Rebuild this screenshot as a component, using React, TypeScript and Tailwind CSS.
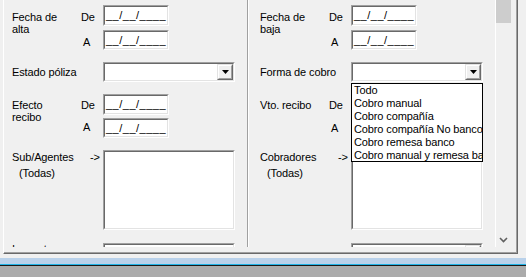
import React from "react";

const Sunken = ({ className, children }: { className: string; children?: React.ReactNode }) => (
  <div className={`border border-t-[#a0a0a0] border-l-[#a0a0a0] border-b-white border-r-white ${className}`}>
    <div className="h-full border border-t-[#696969] border-l-[#696969] border-b-[#e3e3e3] border-r-[#e3e3e3] bg-white">
      {children}
    </div>
  </div>
);

// hidden = box sits under the open dropdown list, so its mask text is not drawn
const DateBox = ({ h, hidden = false }: { h: string; hidden?: boolean }) => (
  <Sunken className={`w-[66px] ${h}`}>
    {!hidden && <div className="pl-[1px] pt-[2px] tracking-[0.5px] whitespace-nowrap">__/__/____</div>}
  </Sunken>
);

const DateLine = ({ label, lc, h, hidden }: { label: string; lc: string; h: string; hidden?: boolean }) => (
  <div className="flex items-start">
    <div className={`w-[22px] ${lc}`}>{label}</div>
    <DateBox h={h} hidden={hidden} />
  </div>
);

const Combo = ({ button = true }: { button?: boolean }) => (
  <Sunken className="w-[132px] h-[20px]">
    <div className="h-full flex justify-end">
      {button && (
        <div className="w-[16px] h-full border border-t-[#e3e3e3] border-l-[#e3e3e3] border-r-[#696969] border-b-[#696969] bg-[#f0f0f0]">
          <div className="h-full border border-t-white border-l-white border-r-[#a0a0a0] border-b-[#a0a0a0] flex items-center justify-center">
            <svg width="7" height="4" viewBox="0 0 7 4">
              <polygon points="0,0 7,0 3.5,4" fill="#000" />
            </svg>
          </div>
        </div>
      )}
    </div>
  </Sunken>
);

const cobroOptions = [
  "Todo",
  "Cobro manual",
  "Cobro compañía",
  "Cobro compañía No banco",
  "Cobro remesa banco",
  "Cobro manual y remesa banco",
];

export default function App() {
  return (
    <div className="w-[526px] h-[277px] bg-[#f0f0f0] flex flex-col overflow-hidden text-black text-[11px] leading-[12px] tracking-[-0.12px] font-['Liberation_Sans',Arial,sans-serif]">
      <div className="h-[258px] pl-[3px] shrink-0">
        {/* raised frame */}
        <div className="w-[515px] h-[254px] border-l border-l-white border-r border-b border-r-[#696969] border-b-[#696969]">
          <div className="h-full border-r border-b border-r-[#a0a0a0] border-b-[#a0a0a0] flex">
            {/* scrolled content */}
            <div className="w-[492px] h-[247px] overflow-hidden flex border-r border-r-white shrink-0">
              {/* left column */}
              <div className="w-[243px] h-full flex flex-col gap-[12px] pt-[5px] pl-[8px] shrink-0">
                <div className="flex items-start">
                  <div className="w-[69px] pt-[6px]">Fecha de<br />alta</div>
                  <div className="flex flex-col gap-[4px]">
                    <DateLine label="De" lc="pt-[6px]" h="h-[21px]" />
                    <DateLine label="A" lc="pt-[6px] pl-[2px]" h="h-[20px]" />
                  </div>
                </div>
                <div className="flex items-start">
                  <div className="w-[91px] pt-[4px]">Estado póliza</div>
                  <Combo />
                </div>
                <div className="flex items-start">
                  <div className="w-[69px] pt-[5px]">Efecto<br />recibo</div>
                  <div className="flex flex-col gap-[3px]">
                    <DateLine label="De" lc="pt-[5px]" h="h-[21px]" />
                    <DateLine label="A" lc="pt-[3px] pl-[2px]" h="h-[20px]" />
                  </div>
                </div>
                <div className="flex items-start">
                  <div className="w-[69px] pt-[1px]">
                    Sub/Agentes
                    <div className="mt-[4px] pl-[7px]">(Todas)</div>
                  </div>
                  <div className="w-[22px] pt-[1px] pl-[9px]">-&gt;</div>
                  <Sunken className="w-[132px] h-[80px]" />
                </div>
                <div className="flex items-start mt-[1px]">
                  <div className="w-[91px] pt-[0px]">Inspector</div>
                  <Sunken className="w-[132px] h-[20px]" />
                </div>
              </div>
              {/* divider */}
              <div className="w-[1px] h-full bg-[#a0a0a0] shrink-0" />
              <div className="w-[1px] h-full bg-white shrink-0" />
              {/* right column */}
              <div className="relative flex-1 h-full flex flex-col gap-[12px] pt-[5px] pl-[11px]">
                <div className="flex items-start">
                  <div className="w-[69px] pt-[6px]">Fecha de<br />baja</div>
                  <div className="flex flex-col gap-[4px]">
                    <DateLine label="De" lc="pt-[6px]" h="h-[21px]" />
                    <DateLine label="A" lc="pt-[6px] pl-[2px]" h="h-[20px]" />
                  </div>
                </div>
                <div className="flex items-start">
                  <div className="w-[91px] pt-[4px]">Forma de cobro</div>
                  <Combo />
                </div>
                <div className="flex items-start">
                  <div className="w-[69px] pt-[5px]">Vto. recibo</div>
                  <div className="flex flex-col gap-[3px]">
                    <DateLine label="De" lc="pt-[5px]" h="h-[21px]" hidden />
                    <DateLine label="A" lc="pt-[4px] pl-[2px]" h="h-[20px]" hidden />
                  </div>
                </div>
                <div className="flex items-start">
                  <div className="w-[69px] pt-[1px]">
                    Cobradores
                    <div className="mt-[4px] pl-[7px]">(Todas)</div>
                  </div>
                  <div className="w-[22px] pt-[1px] pl-[9px]">-&gt;</div>
                  <Sunken className="w-[132px] h-[80px]" />
                </div>
                <div className="flex items-start mt-[1px]">
                  <div className="w-[91px]" />
                  <Combo />
                </div>

                {/* open dropdown list */}
                <div className="absolute top-[83px] left-[102px] w-[132px] h-[79px] border border-black bg-white overflow-hidden">
                  {cobroOptions.map((o) => (
                    <div key={o} className="h-[13px] leading-[13px] pl-[2px] whitespace-nowrap">
                      {o}
                    </div>
                  ))}
                </div>
              </div>
            </div>
            {/* vertical scrollbar */}
            <div className="w-[20px] h-full flex flex-col">
              <div className="w-[15px] h-[23px] bg-[#cdcdcd]" />
              <div className="flex-1" />
              <div className="w-[15px] h-[15px] mb-[5px] flex items-center justify-center">
                <svg width="9" height="6" viewBox="0 0 9 6">
                  <polyline points="1,1 4.5,4.5 8,1" fill="none" stroke="#606060" strokeWidth="1.6" />
                </svg>
              </div>
            </div>
          </div>
        </div>
      </div>
      <div className="h-[6px] bg-[#b9d1ea] shrink-0" />
      <div className="h-[1px] bg-[#1fb3e6] shrink-0" />
      <div className="h-[1px] bg-[#1a1a1a] shrink-0" />
      <div className="flex-1 bg-[#ababab]" />
    </div>
  );
}
